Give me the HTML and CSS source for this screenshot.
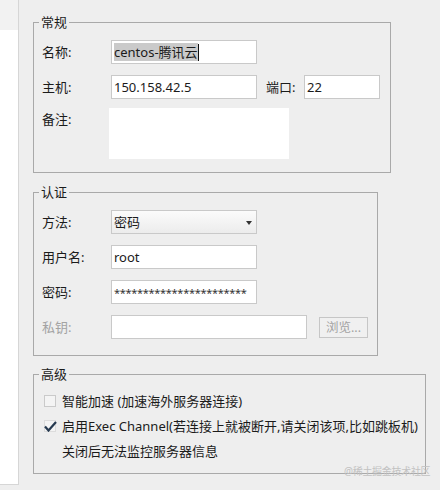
FILE: index.html
```html
<!DOCTYPE html>
<html>
<head>
<meta charset="utf-8">
<link rel="stylesheet" href="styles.css">
</head>
<body>
<div class="app">
  <div class="side">
    <div class="side-head"></div>
    <div class="side-body"></div>
  </div>
  <div class="main">
    <fieldset class="group g1">
      <legend>常规</legend>
      <div class="row">
        <span class="label">名称:</span>
        <div class="field w146"><span class="sel">centos-腾讯云</span><span class="caret"></span></div>
      </div>
      <div class="row">
        <span class="label">主机:</span>
        <div class="field w146">150.158.42.5</div>
        <span class="label port-label">端口:</span>
        <div class="field w77">22</div>
      </div>
      <div class="row top">
        <span class="label">备注:</span>
        <div class="note"></div>
      </div>
    </fieldset>

    <fieldset class="group g2">
      <legend>认证</legend>
      <div class="row">
        <span class="label">方法:</span>
        <div class="field select w146">密码<span class="arrow"></span></div>
      </div>
      <div class="row">
        <span class="label">用户名:</span>
        <div class="field w146">root</div>
      </div>
      <div class="row">
        <span class="label">密码:</span>
        <div class="field w146 pwd">***********************</div>
      </div>
      <div class="row">
        <span class="label disabled">私钥:</span>
        <div class="field w196"></div>
        <div class="btn">浏览...</div>
      </div>
    </fieldset>

    <fieldset class="group g3">
      <legend>高级</legend>
      <div class="check-row">
        <span class="box"></span>
        <span>智能加速 (加速海外服务器连接)</span>
      </div>
      <div class="check-row">
        <span class="box checked"><svg width="13" height="11" viewBox="0 0 13 11"><path d="M1 5.5 L4.5 9.5 L12 1" fill="none" stroke="#263a50" stroke-width="2.2"/></svg></span>
        <span>启用Exec Channel(若连接上就被断开,请关闭该项,比如跳板机)</span>
      </div>
      <div class="check-row">
        <span class="box none"></span>
        <span>关闭后无法监控服务器信息</span>
      </div>
    </fieldset>
  </div>
  <div class="watermark">@稀土掘金技术社区</div>
</div>
</body>
</html>
```

FILE: styles.css
```css
html, body {
  margin: 0;
  padding: 0;
}
body {
  background: #eeeeee;
  font-family: "Noto Sans", "Noto Sans CJK SC", sans-serif;
  font-size: 13px;
  color: #1b1b1b;
}
.app {
  position: relative;
  display: flex;
  width: 440px;
  height: 490px;
  overflow: hidden;
}
.side {
  width: 18px;
  height: 484px;
  border-right: 1px solid #d6d6d6;
  border-bottom: 1px solid #d6d6d6;
  display: flex;
  flex-direction: column;
  flex-shrink: 0;
}
.side-head {
  height: 30px;
  background: #f2f2f2;
}
.side-body {
  flex: 1;
  background: #ffffff;
}
.main {
  padding: 14px 0 0 14px;
}
.group {
  margin: 0;
  border: 1px solid #a9a9a9;
  padding: 0 0 0 4px;
  min-width: 0;
  box-sizing: border-box;
}
.group legend {
  padding: 0 2px;
  margin-left: 1px;
  line-height: 16px;
  height: 16px;
}
.g1 {
  width: 358px;
  padding-top: 10px;
  padding-bottom: 13px;
}
.g2 {
  width: 345px;
  margin-top: 11px;
  padding-top: 10px;
  padding-bottom: 16px;
}
.g3 {
  width: 393px;
  margin-top: 10px;
  padding-top: 6px;
  padding-bottom: 10px;
}
.row {
  display: flex;
  align-items: center;
  height: 24px;
  margin-bottom: 11px;
}
.row:last-child {
  margin-bottom: 0;
}
.g1 .row:nth-child(3) {
  margin-bottom: 9px;
}
.row.top {
  align-items: flex-start;
  height: auto;
}
.label {
  width: 69px;
  margin-left: 4px;
  flex-shrink: 0;
  line-height: 20px;
}
.row.top .label {
  line-height: 22px;
  margin-top: 0;
}
.label.disabled {
  color: #a3a3a3;
}
.port-label {
  width: 38px;
  margin-left: 9px;
}
.field {
  height: 24px;
  box-sizing: border-box;
  border: 1px solid #c9c9c9;
  background: #ffffff;
  padding: 0 2px;
  line-height: 21px;
  white-space: nowrap;
  overflow: hidden;
  display: flex;
  align-items: center;
}
.w146 { width: 146px; }
.w77 { width: 76px; }
.w196 { width: 196px; }
.sel {
  background: #cacaca;
  line-height: 18px;
}
.caret {
  width: 1px;
  height: 17px;
  background: #111;
}
.note {
  width: 180px;
  height: 51px;
  margin-left: -2px;
  background: #ffffff;
}
.select {
  position: relative;
  background: linear-gradient(#fbfbfb, #ececec);
}
.arrow {
  position: absolute;
  right: 4px;
  top: 10px;
  width: 0;
  height: 0;
  border-left: 3.5px solid transparent;
  border-right: 3.5px solid transparent;
  border-top: 4px solid #333;
}
.pwd {
  font-size: 11px;
  letter-spacing: -0.3px;
  color: #333;
}
.btn {
  margin-left: 12px;
  width: 49px;
  height: 21px;
  box-sizing: border-box;
  border: 1px solid #c6c6c6;
  background: #f0f0f0;
  color: #a3a3a3;
  line-height: 19px;
  text-align: center;
  font-size: 12.5px;
}
.check-row {
  display: flex;
  align-items: center;
  height: 25px;
}
.box {
  width: 12px;
  height: 12px;
  box-sizing: border-box;
  border: 1px solid #cacaca;
  background: #f4f4f4;
  margin-left: 6px;
  margin-right: 6px;
  flex-shrink: 0;
  position: relative;
}
.box.checked {
  border-color: #dcdcdc;
}
.box.checked svg {
  position: absolute;
  left: -1px;
  top: 0px;
}
.box.none {
  border: none;
  background: none;
}
.watermark {
  position: absolute;
  left: 344px;
  top: 463px;
  font-size: 10px;
  color: #c2c2c2;
  letter-spacing: -0.3px;
  white-space: nowrap;
}
```
